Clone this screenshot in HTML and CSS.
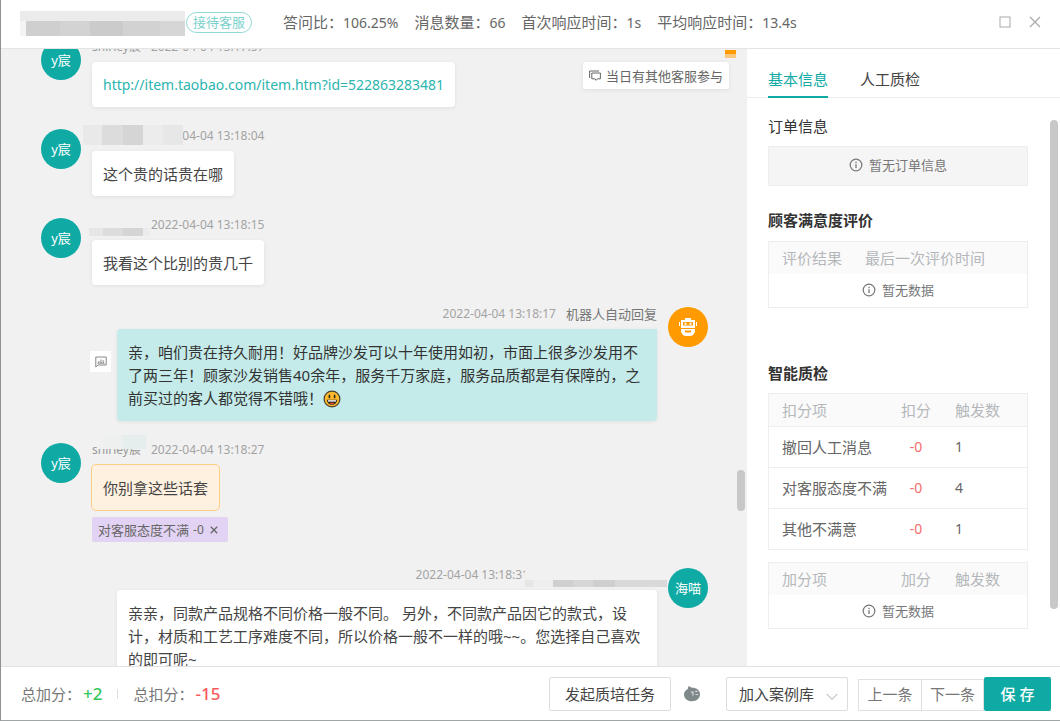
FILE: index.html
```html
<!DOCTYPE html>
<html lang="zh-CN">
<head>
<meta charset="utf-8">
<title>质检详情</title>
<link rel="stylesheet" href="styles.css">
</head>
<body>
<svg class="defs" aria-hidden="true">
  <symbol id="info" viewBox="0 0 14 14"><circle cx="7" cy="7" r="5.8" fill="none" stroke="currentColor" stroke-width="1.2"/><path d="M7 6.2V10M7 3.8V5.2" stroke="currentColor" stroke-width="1.3"/></symbol>
</svg>
<div class="app">
  <header class="header">
    <div class="masked-title"></div>
    <span class="badge">接待客服</span>
    <div class="stats">
      <span>答问比：<span class="num">106.25%</span></span>
      <span>消息数量：<span class="num">66</span></span>
      <span>首次响应时间：<span class="num">1s</span></span>
      <span>平均响应时间：<span class="num">13.4s</span></span>
    </div>
    <div class="window-controls">
      <button type="button" aria-label="最大化"><svg width="12" height="12" viewBox="0 0 12 12"><rect x="1" y="1" width="10" height="10" fill="none" stroke="currentColor"/></svg></button>
      <button type="button" aria-label="关闭"><svg width="12" height="12" viewBox="0 0 12 12"><path d="M1 1L11 11M11 1L1 11" fill="none" stroke="currentColor" stroke-width="1.2"/></svg></button>
    </div>
  </header>

  <div class="body">
    <main class="chat">
      <div class="messages">
        <article class="message">
          <div class="avatar">y宸</div>
          <div class="content">
            <div class="meta"><span class="name">shirley宸</span><time>2022-04-04 13:17:57</time></div>
            <div class="bubble"><a class="link" href="http://item.taobao.com/item.htm?id=522863283481">http://item.taobao.com/item.htm?id=522863283481</a></div>
          </div>
        </article>
        <article class="message">
          <div class="avatar">y宸</div>
          <div class="content">
            <div class="meta"><span class="name"></span><time>2022-04-04 13:18:04</time><i class="mask mask-wide"></i></div>
            <div class="bubble">这个贵的话贵在哪</div>
          </div>
        </article>
        <article class="message">
          <div class="avatar">y宸</div>
          <div class="content">
            <div class="meta"><span class="name"></span><time>2022-04-04 13:18:15</time><i class="mask mask-low"></i></div>
            <div class="bubble">我看这个比别的贵几千</div>
          </div>
        </article>
        <article class="message outgoing">
          <div class="avatar robot"><svg width="18" height="18" viewBox="0 0 18 18"><path fill="#fff" d="M6 0h6v2h4v8H2V2h4zM0 4h1v4H0zM17 4h1v4h-1zM2 11h14v3l-2 3-2 1H6l-2-1-2-3z"/><path fill="#ff9a00" d="M4 4h10v3.500H4zM6 12.500h6v2H6z"/><path fill="#fff" d="M5.500 4.800h2v2h-2zM10.500 4.800h2v2h-2z"/></svg></div>
          <div class="content">
            <div class="meta"><time>2022-04-04 13:18:17</time><span class="role">机器人自动回复</span></div>
            <div class="bubble long bubble-auto">亲，咱们贵在持久耐用！好品牌沙发可以十年使用如初，市面上很多沙发用不了两三年！顾家沙发销售40余年，服务千万家庭，服务品质都是有保障的，之前买过的客人都觉得不错哦！<svg class="emoji" width="18" height="18" viewBox="0 0 18 18" role="img" aria-label="笑脸"><circle cx="9" cy="9" r="7.900" fill="#fdb92c" stroke="#47402e" stroke-width="1.200"/><ellipse cx="6.400" cy="6.500" rx=".9" ry="1.900" fill="#2d2a20"/><ellipse cx="11.600" cy="6.500" rx=".9" ry="1.900" fill="#2d2a20"/><path d="M3.800 9.700h10.400c-.2 3-2.300 5-5.200 5s-5-2-5.200-5z" fill="#2d2a20"/><path d="M5 10.200h8v1.400H5z" fill="#fff"/><path d="M6.500 13.300q2.500-1.600 5 0-2.500 1.700-5 0z" fill="#e8432e"/></svg></div>
          </div>
          <button class="note" type="button" aria-label="批注"><svg width="12" height="12" viewBox="0 0 12 12"><path d="M.8 1h10.400v8H3L.8 11z" fill="none" stroke="currentColor"/><path d="M3.800 7V5M6 7V3.500M8.200 7V4.200M2.500 7.200h7" stroke="currentColor"/></svg></button>
        </article>
        <article class="message">
          <div class="avatar">y宸</div>
          <div class="content">
            <div class="meta"><span class="name">shirley宸</span><time>2022-04-04 13:18:27</time><i class="mask mask-top"></i></div>
            <div class="bubble bubble-flagged">你别拿这些话套</div>
            <div class="flag">对客服态度不满 <span class="flag-num">-0</span><button type="button" aria-label="移除标签"><svg width="8" height="8" viewBox="0 0 8 8"><path d="M.8.8L7.200 7.200M7.200.8L.8 7.200" stroke="currentColor" stroke-width="1.300"/></svg></button></div>
          </div>
        </article>
        <article class="message outgoing">
          <div class="avatar">海喵</div>
          <div class="content">
            <div class="meta"><time>2022-04-04 13:18:31</time><span class="name name-long"></span><i class="mask mask-agent"></i></div>
            <div class="bubble long">亲亲，同款产品规格不同价格一般不同。 另外，不同款产品因它的款式，设计，材质和工艺工序难度不同，所以价格一般不一样的哦~~。您选择自己喜欢的即可呢~</div>
          </div>
        </article>
      </div>
      <div class="marker"></div>
      <div class="notice"><svg width="12" height="12" viewBox="0 0 12 12"><path d="M.6 8V1h9.400M2.800 3h8.600v5.800H8.500L7.200 10.300 5.900 8.800H2.800z" fill="none" stroke="currentColor"/></svg>当日有其他客服参与</div>
      <div class="thumb chat-thumb"></div>
    </main>

    <aside class="side">
      <nav class="tabs" role="tablist">
        <button class="tab active" type="button" role="tab" aria-selected="true">基本信息</button>
        <button class="tab" type="button" role="tab" aria-selected="false">人工质检</button>
      </nav>
      <div class="panel">
        <h2 class="plain">订单信息</h2>
        <div class="empty-box"><svg width="14" height="14"><use href="#info"/></svg>暂无订单信息</div>

        <h2>顾客满意度评价</h2>
        <table class="rating">
          <thead><tr><th class="col-result">评价结果</th><th>最后一次评价时间</th></tr></thead>
          <tbody><tr class="empty"><td colspan="2"><svg width="14" height="14"><use href="#info"/></svg>暂无数据</td></tr></tbody>
        </table>

        <h2 class="spaced">智能质检</h2>
        <table>
          <thead><tr><th class="col-item">扣分项</th><th class="col-score">扣分</th><th>触发数</th></tr></thead>
          <tbody>
            <tr><td>撤回人工消息</td><td class="minus">-0</td><td class="count">1</td></tr>
            <tr><td>对客服态度不满</td><td class="minus">-0</td><td class="count">4</td></tr>
            <tr><td>其他不满意</td><td class="minus">-0</td><td class="count">1</td></tr>
          </tbody>
        </table>
        <table class="bonus">
          <thead><tr><th class="col-item">加分项</th><th class="col-score">加分</th><th>触发数</th></tr></thead>
          <tbody><tr class="empty"><td colspan="3"><svg width="14" height="14"><use href="#info"/></svg>暂无数据</td></tr></tbody>
        </table>
      </div>
      <div class="thumb side-thumb"></div>
    </aside>
  </div>

  <footer class="footer">
    <div class="totals">
      <span>总加分：<b class="plus">+2</b></span>
      <i class="divider"></i>
      <span>总扣分：<b class="deduct">-15</b></span>
    </div>
    <button class="btn task" type="button">发起质培任务</button>
    <svg class="mascot" width="16" height="16" viewBox="0 0 16 16"><path fill="#80898a" d="M4.500 0L8 1.800c4-.3 8 2.400 8 6.400 0 4.200-3.600 7-8 7s-8-2.600-8-6.800C0 6 1.500 4 3.800 3z"/><path d="M7 6.200h2v3.200M11.200 5.400h2.300M11.500 8.500h2.500" fill="none" stroke="#d5dada" stroke-width="1.200"/></svg>
    <div class="select-wrap">
      <select aria-label="加入案例库"><option>加入案例库</option></select>
      <svg width="12" height="8" viewBox="0 0 12 8"><path d="M.8 1L6 6.500 11.200 1" fill="none" stroke="currentColor"/></svg>
    </div>
    <div class="pager">
      <button class="step" type="button">上一条</button><button class="step" type="button">下一条</button><button class="save" type="button">保 存</button>
    </div>
  </footer>
</div>
</body>
</html>
```

FILE: styles.css
```css
* { box-sizing: border-box; }

body {
  margin: 0;
  color: #444;
  font: 15px/24px "Noto Sans", "Noto Sans CJK SC", sans-serif;
}

button, select { font: inherit; color: inherit; }
button { padding: 0; border: 0; background: none; cursor: pointer; }
svg { display: block; flex: none; }
.defs { position: absolute; width: 0; height: 0; }
.num { font-size: 14px; }

.app {
  display: flex;
  flex-direction: column;
  height: 100vh;
  border-left: 1px solid #929292;
  border-bottom: 1px solid #a0a5a5;
  background: #fff;
}

/* Header */
.header {
  display: flex;
  flex: none;
  align-items: center;
  height: 49px;
  padding: 0 19px 4px 19px;
  border-bottom: 1px solid #e4e4e4;
  color: #666;
}
.masked-title {
  width: 165px;
  height: 25px;
  margin-top: 2px;
  background: linear-gradient(#ebebeb 10px, transparent 10px),
    linear-gradient(90deg, #f4f4f4 6px, #cfcfcf 6px 40px, #d3d3d3 40px 70px, #cbcbcb 70px 103px, #d2d2d2 103px 140px, #d6d6d6 140px);
}
.badge {
  height: 21px;
  margin-left: 1px;
  padding: 0 6px;
  border: 1px solid #8fd8d4;
  border-radius: 11px;
  color: #7bd0cc;
  font-size: 13px;
  line-height: 19px;
}
.stats { display: flex; gap: 16px; margin-left: 31px; white-space: nowrap; }
.window-controls { display: flex; gap: 18px; margin-left: auto; color: #aaa; }

/* Body */
.body { display: flex; flex: 1; min-height: 0; }
.chat {
  position: relative;
  flex: 1;
  min-width: 0;
  overflow: hidden;
  background: #f1f1f1;
}
.messages {
  display: flex;
  flex-direction: column;
  gap: 22px;
  margin-top: -9px;
  padding: 0 39px 20px 40px;
}
.message { display: flex; align-items: flex-start; gap: 11px; }
.outgoing { flex-direction: row-reverse; }
.avatar {
  display: flex;
  flex: none;
  align-items: center;
  justify-content: center;
  width: 40px;
  height: 40px;
  border-radius: 50%;
  background: #10aaa5;
  color: #fff;
  font-size: 13px;
}
.robot { background: #ff9a00; }
.content { display: flex; flex-direction: column; align-items: flex-start; max-width: 540px; }
.outgoing .content { align-items: flex-end; }
.meta {
  position: relative;
  display: flex;
  gap: 10px;
  height: 14px;
  margin-bottom: 8px;
  color: #a3a3a3;
  font-size: 12px;
  line-height: 14px;
}
.name { min-width: 49px; color: #999; }
.name-long { min-width: 118px; }
.role { color: #777; font-size: 13px; }
.bubble {
  padding: 11px 11px 10px;
  border-radius: 4px;
  background: #fff;
  box-shadow: 0 1px 4px rgba(0, 0, 0, .07);
}
.long { padding: 12px 12px 11px 11px; line-height: 23px; }
.bubble-auto { background: #c4ebe9; border-radius: 4px 0 4px 4px; color: #333; }
.bubble-flagged { background: #fff1df; box-shadow: 0 0 0 1px #ffcf88; }
.link { display: block; color: #2bb5b0; font-size: 14px; text-decoration: none; }
.emoji { display: inline-block; vertical-align: -4px; }
.flag {
  display: flex;
  align-items: center;
  height: 25px;
  margin: 7px 0 4px;
  padding: 0 10px 0 6px;
  border-radius: 2px;
  background: #e2d3f4;
  color: #666;
  font-size: 13px;
}
.flag-num { margin-left: 4px; font-size: 12px; }
.flag button { margin-left: 6px; }
.note {
  display: flex;
  flex: none;
  align-items: center;
  justify-content: center;
  width: 21px;
  height: 21px;
  margin: 44px -5px 0 0;
  background: #fff;
  color: #888;
}

/* Masked names lie over the meta line */
.mask { position: absolute; }
.mask-wide {
  top: -4px;
  left: -9px;
  width: 100px;
  height: 20px;
  background: linear-gradient(90deg, #e9e9e9 19px, #dcdcdc 19px 40px, #d5d5d5 40px 60px, #ececec 60px 80px, #e7e7e7 80px);
}
.mask-low {
  top: 10px;
  left: -3px;
  width: 61px;
  height: 8px;
  background: linear-gradient(90deg, #e6e6e6 14px, #dcdcdc 14px 34px, #d5d5d5 34px 54px, #ececec 54px);
}
.mask-top {
  top: -8px;
  left: 6px;
  width: 48px;
  height: 14px;
  background: linear-gradient(90deg, #f1f1f1 5px, #eef0f0 5px 25px, #e5eded 25px);
}
.mask-agent {
  top: 1px;
  right: -10px;
  width: 142px;
  height: 18px;
  background: linear-gradient(#f1f1f1 11px, transparent 11px),
    linear-gradient(90deg, #e6e6e6 8px, #eee 8px 28px, #d0d0d0 28px 48px, #d6d6d6 48px 68px, #cfcfcf 68px 90px, #d9d9d9 90px);
}

/* Overlays on the chat area */
.marker {
  position: absolute;
  top: 1px;
  right: 11px;
  width: 11px;
  height: 8px;
  background: linear-gradient(#ff9a00 4px, #fac87d 4px);
}
.notice {
  position: absolute;
  top: 13px;
  right: 18px;
  display: flex;
  align-items: center;
  gap: 5px;
  height: 27px;
  padding: 0 6px;
  border-radius: 2px;
  background: #fff;
  box-shadow: 0 1px 4px rgba(0, 0, 0, .08);
  color: #666;
  font-size: 13px;
}
.thumb { position: absolute; right: 2px; width: 8px; border-radius: 4px; background: #c8c8c8; }
.chat-thumb { top: 421px; height: 41px; }
.side-thumb { top: 71px; height: 489px; }

/* Side panel */
.side { position: relative; flex: none; width: 313px; overflow: hidden; }
.tabs {
  display: flex;
  gap: 32px;
  height: 49px;
  padding: 14px 21px 0;
  border-bottom: 1px solid #ececec;
}
.tab { height: 35px; padding-bottom: 1px; border-bottom: 2px solid transparent; }
.active { border-color: #10aaa5; color: #10aaa5; }
.panel { padding: 16px 32px 0 21px; }
h2 { margin: 22px 0 9px; color: #333; font-size: 15px; font-weight: 700; line-height: 24px; }
h2.plain { margin: 0 0 8px; font-weight: 400; }
h2.spaced { margin: 53px 0 8px; }
.empty-box {
  display: flex;
  align-items: center;
  justify-content: center;
  gap: 6px;
  height: 40px;
  padding-bottom: 2px;
  border: 1px solid #eee;
  background: #f5f5f5;
  color: #777;
  font-size: 13px;
}
table {
  width: 100%;
  border: 1px solid #eee;
  border-spacing: 0;
  table-layout: fixed;
  color: #666;
}
th {
  height: 32px;
  padding: 0 0 0 11px;
  background: #fafafa;
  color: #b5b8bb;
  font-weight: 400;
  text-align: left;
}
td { height: 41px; padding: 0 0 0 11px; border-top: 1px solid #eee; }
.empty td { height: 33px; padding: 0 0 2px; border: 0; color: #777; font-size: 13px; text-align: center; }
.empty svg { display: inline-block; margin-right: 6px; vertical-align: -2px; }
th:first-child, td:first-child:not([colspan]) { padding-left: 13px; }
.col-result { width: 85px; }
.col-item { width: 119px; }
.col-score { width: 56px; padding: 0; text-align: center; }
.minus { padding: 0; color: #f56c6c; font-size: 14px; text-align: center; }
.count { font-size: 14px; }
.bonus { margin-top: 12px; }

/* Footer */
.footer {
  display: flex;
  flex: none;
  align-items: center;
  height: 54px;
  padding: 0 9px 0 20px;
  border-top: 1px solid #e2e2e2;
  white-space: nowrap;
}
.totals { display: flex; align-items: center; gap: 15px; margin-right: auto; color: #777; }
.totals b { margin-left: 2px; font-size: 17px; font-weight: 500; }
.plus { color: #34c759; }
.deduct { color: #f65b5b; }
.divider { width: 1px; height: 10px; background: #ddd; }
.btn { height: 34px; border: 1px solid #dcdcdc; border-radius: 2px; background: #fff; }
.task { padding: 0 15px; }
.mascot { margin: 0 26px 0 13px; }
.select-wrap { position: relative; width: 122px; }
.select-wrap select {
  display: block;
  width: 100%;
  height: 34px;
  padding: 0 12px;
  border: 1px solid #dcdcdc;
  border-radius: 2px;
  background: #fff;
  appearance: none;
}
.select-wrap svg { position: absolute; top: 16px; right: 10px; color: #aaa; pointer-events: none; }
.pager { display: flex; align-items: flex-end; margin-left: 10px; color: #777; }
.step { width: 64px; height: 32px; padding-bottom: 2px; border: 1px solid #e0e0e0; }
.step + .step { border-left: 0; width: 62px; }
.save { width: 67px; height: 34px; border-radius: 2px; background: #10aaa5; color: #fff; font-weight: 500; }
```
